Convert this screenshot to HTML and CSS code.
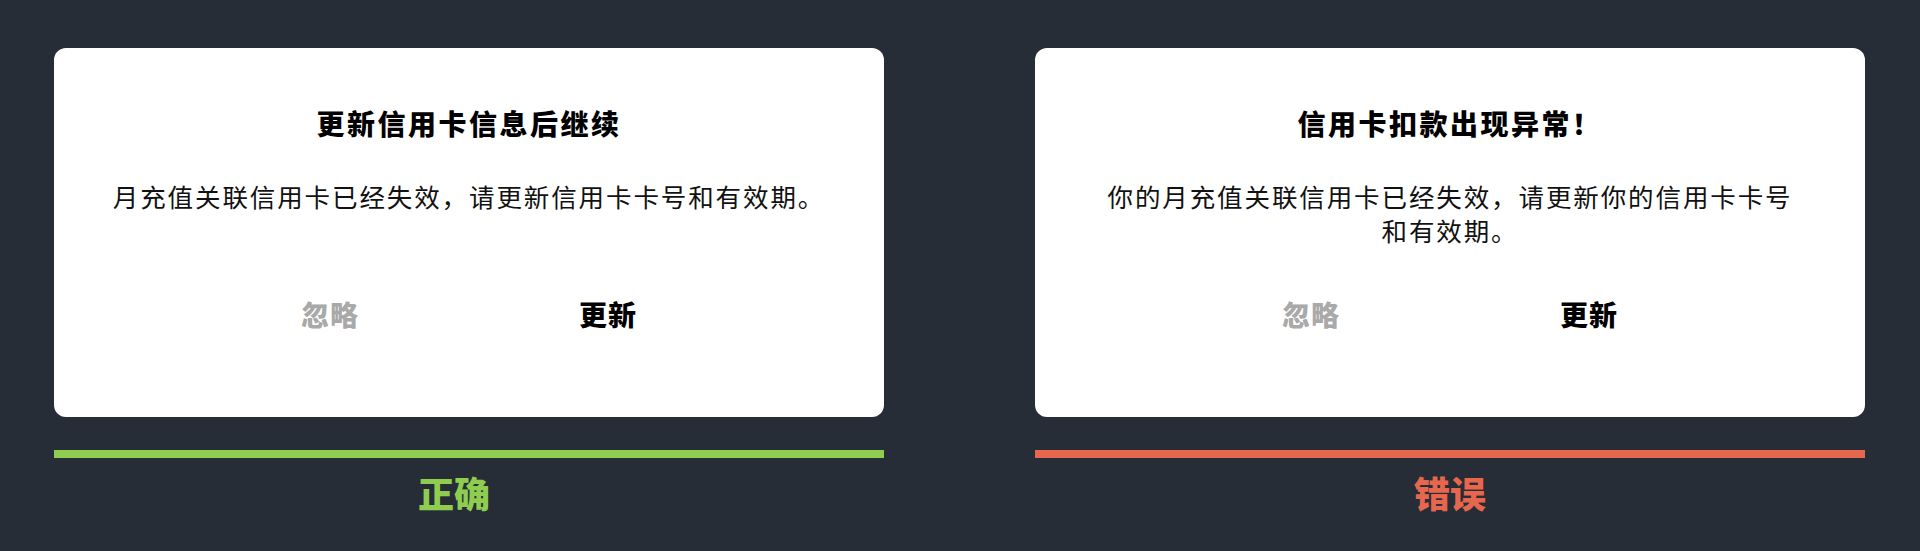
FILE: index.html
```html
<!DOCTYPE html>
<html lang="zh-CN">
<head>
<meta charset="utf-8">
<title>信用卡提示对比</title>
<link rel="stylesheet" href="styles.css">
</head>
<body>
<main class="compare">
  <section class="example">
    <div class="dialog">
      <h2 class="dialog-title">更新信用卡信息后继续</h2>
      <p class="dialog-message">月充值关联信用卡已经失效，请更新信用卡卡号和有效期。</p>
      <div class="dialog-actions">
        <button class="action action--secondary" type="button">忽略</button>
        <button class="action action--primary" type="button">更新</button>
      </div>
    </div>
    <div class="verdict-bar verdict-bar--good"></div>
    <div class="verdict verdict--good">正确</div>
  </section>
  <section class="example">
    <div class="dialog">
      <h2 class="dialog-title">信用卡扣款出现异常！</h2>
      <p class="dialog-message">你的月充值关联信用卡已经失效，请更新你的信用卡卡号<br>和有效期。</p>
      <div class="dialog-actions">
        <button class="action action--secondary" type="button">忽略</button>
        <button class="action action--primary" type="button">更新</button>
      </div>
    </div>
    <div class="verdict-bar verdict-bar--bad"></div>
    <div class="verdict verdict--bad">错误</div>
  </section>
</main>
</body>
</html>
```

FILE: styles.css
```css
* {
  box-sizing: border-box;
}

html, body {
  margin: 0;
  padding: 0;
}

body {
  background: #272d36;
  font-family: "Noto Sans CJK SC", "Noto Sans", sans-serif;
  color: #000;
  width: 1920px;
  height: 551px;
  overflow: hidden;
}

.compare {
  display: flex;
  justify-content: space-between;
  padding: 48px 55px 0 54px;
}

.example {
  width: 830px;
  display: flex;
  flex-direction: column;
}

.dialog {
  background: #ffffff;
  border-radius: 12px;
  height: 369px;
  padding-top: 57px;
  display: flex;
  flex-direction: column;
  align-items: center;
  text-align: center;
}

.dialog-title {
  margin: 0;
  font-size: 28px;
  font-weight: 900;
  line-height: 36px;
  letter-spacing: 2.5px;
  color: #000;
}

.dialog-message {
  margin: 38px 0 0;
  min-height: 68px;
  font-size: 25.5px;
  line-height: 34px;
  letter-spacing: 1.9px;
  color: #111;
}

.dialog-actions {
  margin-top: 49px;
  width: 556px;
  display: grid;
  grid-template-columns: 1fr 1fr;
}

.action {
  background: none;
  border: 0;
  padding: 0;
  font-family: inherit;
  font-size: 28px;
  font-weight: 900;
  line-height: 36px;
  letter-spacing: 1px;
  text-align: center;
  cursor: pointer;
}

.action--secondary {
  color: #a9a9a9;
}

.action--primary {
  color: #000;
}

.verdict-bar {
  margin-top: 33px;
  height: 8px;
}

.verdict-bar--good {
  background: #8fcd50;
}

.verdict-bar--bad {
  background: #e6674e;
}

.verdict {
  margin-top: 14px;
  font-size: 36px;
  font-weight: 900;
  line-height: 40px;
  text-align: center;
}

.verdict--good {
  color: #8fcd50;
  padding-right: 30px;
}

.verdict--bad {
  color: #e6674e;
}
```
